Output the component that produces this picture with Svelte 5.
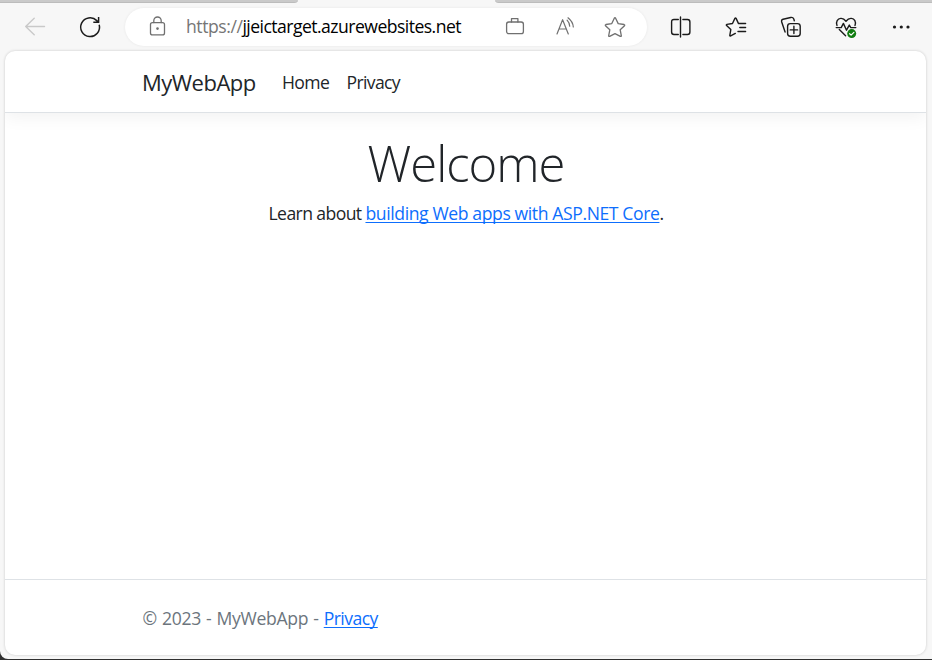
<script>
  const navLinks = ['Home', 'Privacy'];
</script>

<div class="desktop">
  <div class="window">
    <div class="tabstrip"><div class="strip left"></div><div class="strip right"></div></div>

    <div class="toolbar">
      <svg class="icon back" viewBox="0 0 24 24"><path d="M21.5 11.5H2.7M11.2 3.2 2.7 11.5l8.5 8.3" /></svg>
      <svg class="icon reload" viewBox="0 0 24 24"><path d="M21.2 9.8A9.4 9.4 0 1 1 18.8 5.6L20.4 7.1M20.6 2v5.3h-5.3" /></svg>

      <div class="address">
        <svg class="icon" viewBox="0 0 24 24">
          <rect x="5.5" y="7.6" width="14" height="12.3" rx="2" />
          <path d="M8.8 7.5V5.7a3.7 3.7 0 0 1 7.4 0v1.8" />
          <circle class="solid" cx="12.5" cy="13.6" r="1.3" />
        </svg>
        <div class="url"><span>https://</span>jjeictarget.azurewebsites.net</div>
        <svg class="icon" viewBox="0 0 24 24">
          <rect x="3.6" y="7" width="16.8" height="11.6" rx="2.2" />
          <path d="M8.5 7V3.6h6.4V7" />
        </svg>
        <svg class="icon aloud" viewBox="0 0 24 24">
          <path d="M3 19 8.6 4.7 14.3 19M4.9 14h7.6M13.1 5.1c1.6 1.7 2.5 3.5 2.6 6.1M14 2.8c3.2 2.5 5 5.3 5.3 9.2" />
        </svg>
        <svg class="icon star" viewBox="0 0 24 24">
          <path d="M11.3 3.2q.7-1 1.3 0l2.6 5.4 5.9.9q1 .4.4 1.2l-4.3 4.1 1.1 5.9q0 1-1 .7L12 18.7l-5.3 2.7q-1 .3-1-.7l1.1-5.9-4.3-4.1q-.6-.8.4-1.2l5.9-.9z" />
        </svg>
      </div>

      <div class="tools">
        <svg class="icon" viewBox="0 0 24 24">
          <path d="M9.3 4.5H5Q2.6 4.5 2.6 7v10q0 2.5 2.4 2.5h4.3M13.9 4.5h4.6q2.4 0 2.4 2.5v10q0 2.5-2.4 2.5h-4.6" />
          <path d="M11.5 2v20" />
        </svg>
        <svg class="icon" viewBox="0 0 24 24">
          <path d="M14.6 8.5h7M15.8 12.5h5.8M14 16.5h7.6M14.4 8.4l-2.3-5q-.6-1-1.2 0L8.5 8.5l-5.6.9q-1 .4-.3 1.1l4.2 4.1-1 5.8q0 .9.9.5l4.6-2.5" />
        </svg>
        <svg class="icon" viewBox="0 0 24 24">
          <rect x="8.6" y="8.6" width="12.6" height="12.6" rx="2.7" />
          <path d="M14.9 11.2v7.4M11.2 14.9h7.4M6.1 17 2.7 7Q2.1 4.9 4.1 4.2l7.6-1.7q2.2-.5 3.1 1.5l.5 1.8" />
        </svg>
        <svg class="icon" viewBox="0 0 24 24">
          <path d="M3 10.5C1.6 6.8 3.6 3.7 6.8 3.4c2.3-.2 3.8 1 5.2 2.8 1.4-1.8 3-3 5.3-2.8 3.2.3 5.1 3.4 3.7 7.1M2.2 12.6h5l2.2-4.2 3.1 6.8 2.8-5.1 1.5 2.5h5M5.3 14.4l6.3 6.3" />
          <circle class="ok" cx="17.7" cy="18.6" r="4.5" />
          <path class="check" d="m15.6 18.7 1.5 1.4 2.8-2.8" />
        </svg>
        <svg class="icon dots" viewBox="0 0 24 24">
          <circle cx="5.5" cy="12" r="1.6" /><circle cx="12.3" cy="12" r="1.6" /><circle cx="19" cy="12" r="1.6" />
        </svg>
      </div>
    </div>

    <div class="page">
      <header>
        <a class="brand" href="#top">MyWebApp</a>
        <nav>
          {#each navLinks as label}
            <a href="#top" class={label.toLowerCase()}>{label}</a>
          {/each}
        </nav>
      </header>
      <main>
        <h1>Welcome</h1>
        <p>Learn about <a href="#top">building Web apps with ASP.NET Core</a>.</p>
      </main>
      <footer>
        <span>© 2023 - MyWebApp - <a href="#top">Privacy</a></span>
      </footer>
    </div>
  </div>
</div>

<style>
  :global(body) { margin: 0; }
  .desktop {
    width: 932px; height: 660px; box-sizing: border-box;
    padding-bottom: 1px; overflow: hidden; background: #303030;
    font-family: "Open Sans", "Noto Sans", sans-serif;
    font-size: 17.6px; color: #212529;
  }
  .window {
    height: 659px; display: flex; flex-direction: column;
    background: #f7f7f7; border-radius: 0 0 0 8px; overflow: hidden;
  }
  .tabstrip { height: 3px; flex: none; display: flex; justify-content: space-between; }
  .strip { box-sizing: border-box; background: #cacaca; border-bottom: 1px solid #bcbcbc; }
  .left { width: 298px; border-bottom-right-radius: 4px 3px; }
  .right { width: 437px; border-bottom-left-radius: 4px 3px; }
  .toolbar {
    height: 48px; flex: none; display: flex; align-items: center;
    box-sizing: border-box; padding: 0 19px 0 23px;
  }
  .icon {
    width: 24px; height: 24px; flex: none; fill: none; stroke: #1b1b1b;
    stroke-width: 1.4; stroke-linecap: round; stroke-linejoin: round;
  }
  .back { stroke: #c9c9c9; }
  .reload { margin-left: 31px; stroke-width: 1.5; stroke-linecap: butt; stroke-linejoin: miter; }
  .address {
    width: 522px; height: 38px; margin-left: 23px; border-radius: 19px;
    background: #fff; box-shadow: 0 0 3px #00000012;
    display: flex; align-items: center; box-sizing: border-box; padding: 0 20px;
  }
  .address .icon { stroke: #707070; stroke-width: 1.3; }
  .address .solid { fill: #707070; stroke: none; }
  .address .aloud { margin-left: 27px; stroke-width: 1.2; }
  .address .star { margin-left: 25px; }
  .url {
    width: 317px; margin-left: 17px; padding-bottom: 2px; white-space: nowrap;
    line-height: 24px; color: #000; letter-spacing: -.54px;
  }
  .url span { color: #767676; letter-spacing: -.45px; }
  .tools { display: flex; gap: 31px; margin-left: 22px; }
  .ok { fill: #107c10; stroke: none; }
  .check { stroke: #fff; stroke-width: 1.2; }
  .dots { fill: #1b1b1b; stroke: none; }
  .page {
    width: 921px; height: 604px; flex: none; margin-left: 5px;
    display: flex; flex-direction: column; background: #fff;
    border-radius: 10px; overflow: hidden; box-shadow: 0 0 3px #00000030;
  }
  header {
    height: 62px; flex: none; box-sizing: border-box; padding: 0 0 0 137px;
    display: flex; align-items: center; border-bottom: 1px solid #dee2e6;
    box-shadow: 0 5px 16px #0000000d;
  }
  header a { color: #212529; text-decoration: none; white-space: nowrap; }
  .brand { width: 140px; font-size: 22px; line-height: 30px; letter-spacing: -.5px; }
  nav { display: flex; line-height: 24px; letter-spacing: -.65px; }
  .home { width: 64.5px; }
  main { flex: 1; text-align: center; }
  h1 { margin: 19px 0 0 1px; font-size: 49px; line-height: 62px; font-weight: 300; letter-spacing: -1px; }
  p { margin: 6px 0 0 1px; line-height: 26px; letter-spacing: -.6px; }
  p a { letter-spacing: -.4px; }
  main a, footer a { color: #0d6efd; text-decoration: underline; text-underline-offset: 2px; text-decoration-thickness: 1px; text-decoration-skip-ink: none; }
  footer {
    height: 76px; flex: none; box-sizing: border-box; border-top: 1px solid #dee2e6;
    display: flex; align-items: center; padding: 0 0 0 137.5px;
    color: #6c757d; letter-spacing: -.3px; word-spacing: .8px;
  }
  footer a { letter-spacing: -.57px; }
</style>
